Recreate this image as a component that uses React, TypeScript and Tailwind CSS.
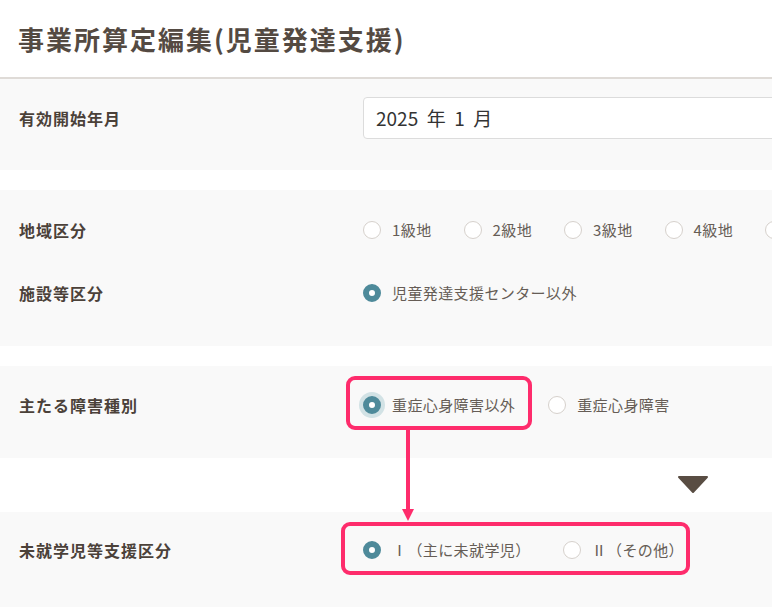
import React from 'react'

const FONT = "font-['Noto_Sans_CJK_JP','Noto_Sans',sans-serif]"

function Radio({ checked, focus }: { checked?: boolean; focus?: boolean }) {
  if (checked) {
    return (
      <span
        className={`block w-[18px] h-[18px] shrink-0 rounded-full border-[6px] border-[#4e8a9a] bg-white ${
          focus ? 'ring-4 ring-[#d2e2e5]' : ''
        }`}
      />
    )
  }
  return <span className="block w-[18px] h-[18px] shrink-0 rounded-full border border-[#d6d1cc] bg-white" />
}

function Option({ label, checked, focus, className = '' }: { label: string; checked?: boolean; focus?: boolean; className?: string }) {
  return (
    <label className={`flex items-center gap-[11px] ${className}`}>
      <Radio checked={checked} focus={focus} />
      <span className="text-[15px] tracking-[0.4px] text-[#665d56] whitespace-nowrap">{label}</span>
    </label>
  )
}

function Label({ children }: { children: React.ReactNode }) {
  return (
    <div className="w-[363px] shrink-0 pl-[19px] text-[16px] font-bold tracking-[1px] text-[#4b4139]">{children}</div>
  )
}

export default function App() {
  return (
    <div className={`relative w-[772px] h-[607px] overflow-hidden bg-white ${FONT}`}>
      {/* Header */}
      <header className="h-[79px] flex items-center pl-[18px] border-b-2 border-[#dfdbd7]">
        <h1 className="text-[26px] font-bold tracking-[2px] text-[#544a42]">事業所算定編集(児童発達支援)</h1>
      </header>

      {/* 有効開始年月 */}
      <section className="bg-[#f9f9f9] pt-[18px] pb-[31px] flex items-center">
        <Label>有効開始年月</Label>
        <div className="h-[42px] w-[440px] shrink-0 flex items-center pl-[12px] bg-white border border-[#dcdcdc] rounded-[4px] text-[19px] text-[#333] whitespace-pre">
          {'2025  年  1  月'}
        </div>
      </section>

      <div className="h-[20px]" />

      {/* 地域区分 / 施設等区分 */}
      <section className="bg-[#f9f9f9] pt-[21px] pb-[34px] flex flex-col gap-[25px]">
        <div className="h-[38px] flex items-center">
          <Label>地域区分</Label>
          <div className="flex items-center">
            <Option label="1級地" className="w-[100.5px] shrink-0" />
            <Option label="2級地" className="w-[100.5px] shrink-0" />
            <Option label="3級地" className="w-[100.5px] shrink-0" />
            <Option label="4級地" className="w-[100.5px] shrink-0" />
            <Radio />
          </div>
        </div>
        <div className="h-[38px] flex items-center">
          <Label>施設等区分</Label>
          <Option label="児童発達支援センター以外" checked />
        </div>
      </section>

      <div className="h-[20px]" />

      {/* 主たる障害種別 */}
      <section className="bg-[#f9f9f9] pt-[20px] pb-[34px]">
        <div className="h-[38px] flex items-center">
          <Label>主たる障害種別</Label>
          <Option label="重症心身障害以外" checked focus />
          <Option label="重症心身障害" className="ml-[33px]" />
        </div>
      </section>

      <div className="h-[54px] flex items-center">
        <svg width="32" height="19" viewBox="0 0 32 19" className="ml-[677px] mt-[-2px]">
          <polygon points="2,2 30,2 16,17" fill="#594d43" stroke="#594d43" strokeWidth="2" strokeLinejoin="round" />
        </svg>
      </div>

      {/* 未就学児等支援区分 */}
      <section className="bg-[#f9f9f9] pt-[19px] pb-[38px]">
        <div className="h-[38px] flex items-center">
          <Label>未就学児等支援区分</Label>
          <Option label="Ⅰ（主に未就学児）" checked />
          <Option label="Ⅱ（その他）" className="ml-[32px]" />
        </div>
      </section>

      {/* Annotations */}
      <div className="absolute left-[346px] top-[376px] w-[186px] h-[54px] border-4 border-[#fe2c6c] rounded-[9px]" />
      <div className="absolute left-[406px] top-[430px] w-[4px] h-[82px] bg-[#fe2c6c]" />
      <svg className="absolute left-[402px] top-[509px]" width="12" height="12" viewBox="0 0 12 12">
        <polygon points="0,0 12,0 6,12" fill="#fe2c6c" />
      </svg>
      <div className="absolute left-[341px] top-[522px] w-[349px] h-[53px] border-4 border-[#fe2c6c] rounded-[9px]" />
    </div>
  )
}
